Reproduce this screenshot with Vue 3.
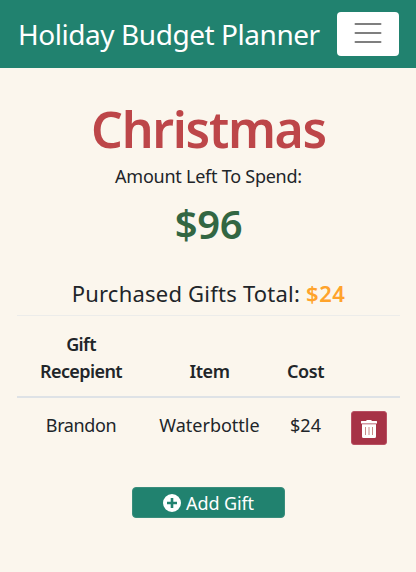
<script setup>
import { ref } from 'vue'

const budgetLeft = ref(96)
const gifts = ref([{ recipient: 'Brandon', item: 'Waterbottle', cost: 24 }])
</script>

<template>
  <div class="page">
    <header class="navbar">
      <span class="brand">Holiday Budget Planner</span>
      <button class="toggler" aria-label="Menu">
        <svg width="30" height="30" viewBox="0 0 30 30">
          <path d="M2.500 5h25M2.500 14h25M2.500 23h25" stroke="#7f7f7f" stroke-width="2" stroke-linecap="round" />
        </svg>
      </button>
    </header>
    <main>
      <h1>Christmas</h1>
      <p class="label">Amount Left To Spend:</p>
      <h2>${{ budgetLeft }}</h2>
      <p class="total"><span class="total-label">Purchased Gifts Total:</span><strong>$24</strong></p>
      <table>
        <thead>
          <tr>
            <th class="c1">Gift<br />Recepient</th>
            <th class="c2">Item</th>
            <th class="c3">Cost</th>
            <th class="c4"></th>
          </tr>
        </thead>
        <tbody>
          <tr v-for="g in gifts" :key="g.recipient">
            <td class="name">{{ g.recipient }}</td>
            <td>{{ g.item }}</td>
            <td>${{ g.cost }}</td>
            <td class="action">
              <button class="delete" aria-label="Delete">
                <svg width="16" height="18" viewBox="0 0 16 18">
                  <path fill="#fff" d="M0 1.500Q0 1 .5 1H5l.6-.8Q5.800 0 6.200 0h3.600q.4 0 .6.200L11 1h4.500q.5 0 .5.500V3.500H0ZM1 4.300h14v12.200Q15 18 13.500 18h-11Q1 18 1 16.500Z" />
                  <path stroke="#c98c88" stroke-width="1" d="M4.500 7v8M8 7v8M11.500 7v8" />
                </svg>
              </button>
            </td>
          </tr>
        </tbody>
      </table>
      <button class="add">
        <svg width="18" height="18" viewBox="0 0 18 18">
          <circle cx="9" cy="9" r="9" fill="#fff" />
          <path d="M9 4v10M4 9h10" stroke="#21826f" stroke-width="2.6" />
        </svg>
        <span>Add Gift</span>
      </button>
    </main>
  </div>
</template>

<style>
body { background: #fbf6ed; }
</style>
<style scoped>
* { box-sizing: border-box; }
.page {
  min-height: 572px;
  background: #fbf6ed;
  color: #212529;
  font-family: "Noto Sans", "Open Sans", sans-serif;
  white-space: nowrap;
}
.navbar {
  height: 68px;
  padding: 0 17px 0 18px;
  background: #21826f;
  display: flex;
  align-items: center;
  justify-content: space-between;
}
.brand { color: #fff; font-size: 28px; letter-spacing: -0.45px; line-height: 40px; }
.toggler {
  width: 62px;
  height: 44px;
  margin-bottom: 1px;
  padding: 0;
  border: 0;
  border-radius: 4px;
  background: #fff;
  display: flex;
  align-items: center;
  justify-content: center;
}
main { padding: 30px 16px 0 17px; text-align: center; }
h1, h2, p { margin: 0; }
h1 { color: #bd4649; font-size: 50px; line-height: 62px; font-weight: 600; letter-spacing: -1.3px; }
.label { font-size: 18px; line-height: 30px; margin-top: 1px; letter-spacing: -0.25px; }
h2 { color: #326642; font-size: 40px; line-height: 48px; font-weight: 600; letter-spacing: -0.3px; margin-top: 9px; }
.total { font-size: 22px; line-height: 36px; margin-top: 27px; height: 40px; letter-spacing: 0.22px; }
.total-label { margin-right: 6px; }
.total strong { color: #ffa32b; font-weight: 600; letter-spacing: 0.5px; }
table { width: 383px; border-collapse: separate; border-spacing: 0; table-layout: fixed; border-top: 1px solid #ececea; font-size: 18px; line-height: 27px; }
.c1 { width: 128px; }
.c2 { width: 129px; }
.c3 { width: 63px; }
.c4 { width: 63px; }
th { height: 82px; padding: 3px 0 0; border-bottom: 2px solid #dee2e6; vertical-align: middle; font-weight: 600; letter-spacing: -0.6px; }
.c2, .c3 { padding: 0 0 11px; vertical-align: bottom; letter-spacing: -0.4px; }
td { height: 60px; padding: 0 0 5px; vertical-align: middle; }
.name { letter-spacing: -0.4px; }
.action { padding: 0; }
.delete {
  width: 36px;
  height: 34px;
  margin: 0 0 0 1px;
  padding: 2px 0 0;
  border: 1px solid #b85062;
  border-radius: 3px;
  background: #a73346;
  display: inline-flex;
  align-items: center;
  justify-content: center;
  vertical-align: middle;
}
.add {
  width: 153px;
  height: 31px;
  margin: 29px 115px 0;
  padding: 1px 0 0;
  border: 1px solid #398d7c;
  border-radius: 4px;
  background: #21826f;
  color: #fff;
  font: 18px/29px "Noto Sans", sans-serif;
  display: flex;
  align-items: center;
  justify-content: center;
  gap: 5px;
}
.add span { letter-spacing: -0.1px; }
</style>
